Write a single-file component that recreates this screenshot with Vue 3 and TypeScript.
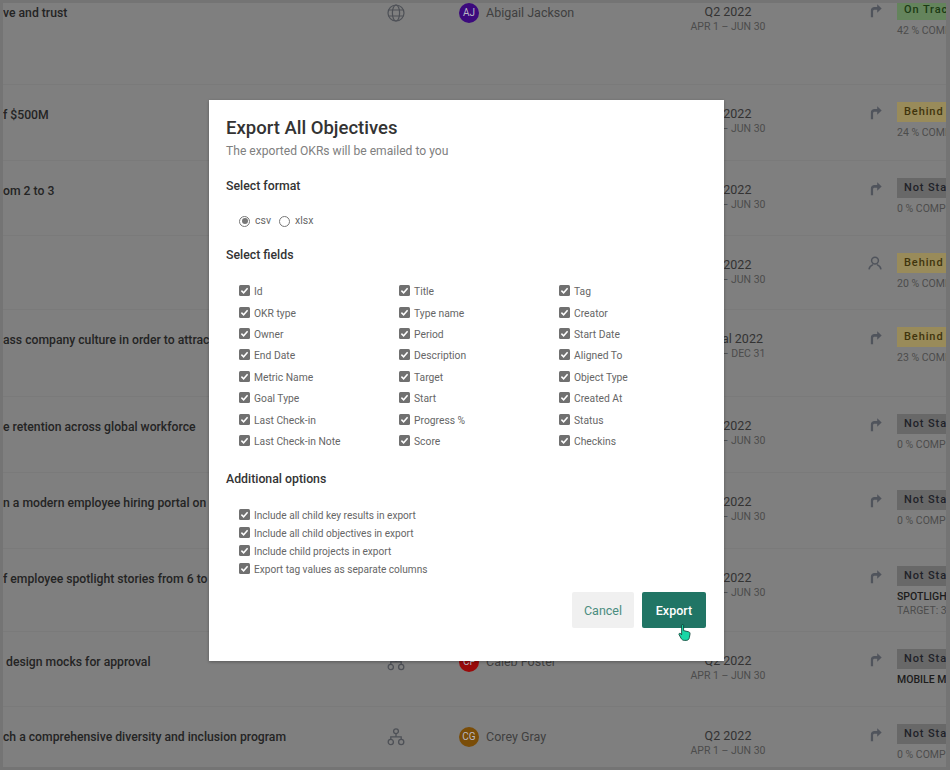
<script setup lang="ts">
import { ref } from 'vue';

interface Row {
  title: string;
  height: number;
  icon: 'share' | 'person';
  level?: 'globe' | 'tree';
  owner?: { initials: string; name: string; color: string };
  period: string;
  dates: string;
  status: string;
  statusClass: string;
  metric: string;
  target?: string;
}

const rows: Row[] = [
  { title: 've and trust', height: 102, icon: 'share', level: 'globe', owner: { initials: 'AJ', name: 'Abigail Jackson', color: '#3c0a7d' }, period: 'Q2 2022', dates: 'APR 1 – JUN 30', status: 'On Track', statusClass: 'on-track', metric: '42 % COMPLETE' },
  { title: 'f $500M', height: 76, icon: 'share', period: 'Q2 2022', dates: 'APR 1 – JUN 30', status: 'Behind', statusClass: 'behind', metric: '24 % COMPLETE' },
  { title: 'om 2 to 3', height: 75, icon: 'share', period: 'Q2 2022', dates: 'APR 1 – JUN 30', status: 'Not Started', statusClass: 'not-started', metric: '0 % COMPLETE' },
  { title: '', height: 74, icon: 'person', period: 'Q2 2022', dates: 'APR 1 – JUN 30', status: 'Behind', statusClass: 'behind', metric: '20 % COMPLETE' },
  { title: 'ass company culture in order to attract', height: 87, icon: 'share', period: 'Annual 2022', dates: 'JAN 1 – DEC 31', status: 'Behind', statusClass: 'behind', metric: '23 % COMPLETE' },
  { title: 'e retention across global workforce', height: 76, icon: 'share', period: 'Q2 2022', dates: 'APR 1 – JUN 30', status: 'Not Started', statusClass: 'not-started', metric: '0 % COMPLETE' },
  { title: 'n a modern employee hiring portal on', height: 76, icon: 'share', period: 'Q2 2022', dates: 'APR 1 – JUN 30', status: 'Not Started', statusClass: 'not-started', metric: '0 % COMPLETE' },
  { title: 'f employee spotlight stories from 6 to', height: 83, icon: 'share', period: 'Q2 2022', dates: 'APR 1 – JUN 30', status: 'Not Started', statusClass: 'not-started', metric: 'SPOTLIGHT STORIES', target: 'TARGET: 30' },
  { title: ' design mocks for approval', height: 75, icon: 'share', level: 'tree', owner: { initials: 'CF', name: 'Caleb Foster', color: '#990a0a' }, period: 'Q2 2022', dates: 'APR 1 – JUN 30', status: 'Not Started', statusClass: 'not-started', metric: 'MOBILE MOCKS' },
  { title: 'ch a comprehensive diversity and inclusion program', height: 75, icon: 'share', level: 'tree', owner: { initials: 'CG', name: 'Corey Gray', color: '#7a4d08' }, period: 'Q2 2022', dates: 'APR 1 – JUN 30', status: 'Not Started', statusClass: 'not-started', metric: '0 % COMPLETE' }
];

const fields = [
  'Id', 'Title', 'Tag',
  'OKR type', 'Type name', 'Creator',
  'Owner', 'Period', 'Start Date',
  'End Date', 'Description', 'Aligned To',
  'Metric Name', 'Target', 'Object Type',
  'Goal Type', 'Start', 'Created At',
  'Last Check-in', 'Progress %', 'Status',
  'Last Check-in Note', 'Score', 'Checkins'
];

const options = [
  'Include all child key results in export',
  'Include all child objectives in export',
  'Include child projects in export',
  'Export tag values as separate columns'
];

const format = ref('csv');
</script>

<template>
  <div class="page">
    <div class="list">
      <div v-for="row in rows" :key="row.title + row.height" class="row" :style="{ height: `${row.height}px` }">
        <div class="title">{{ row.title }}</div>
        <div class="level">
          <svg v-if="row.level === 'globe'" width="18" height="18" viewBox="0 0 18 18" fill="none" stroke="#4e5157" stroke-width="1.2">
            <circle cx="9" cy="9" r="8" />
            <ellipse cx="9" cy="9" rx="3.6" ry="8" />
            <path d="M1.6 6h14.8M1.6 12h14.8" />
          </svg>
          <svg v-else-if="row.level === 'tree'" width="18" height="18" viewBox="0 0 18 18" fill="none" stroke="#4e5157" stroke-width="1.3">
            <circle cx="9" cy="3.2" r="2.4" />
            <circle cx="3.8" cy="14" r="2.6" />
            <circle cx="14.2" cy="14" r="2.6" />
            <path d="M9 5.6v3.2M3.8 11.4V8.8h10.4v2.6" />
          </svg>
        </div>
        <div class="owner">
          <template v-if="row.owner">
            <span class="avatar" :style="{ background: row.owner.color }">{{ row.owner.initials }}</span>
            <span class="owner-name">{{ row.owner.name }}</span>
          </template>
        </div>
        <div class="period">
          <div class="period-name">{{ row.period }}</div>
          <div class="period-dates">{{ row.dates }}</div>
        </div>
        <div class="kind">
          <svg v-if="row.icon === 'share'" width="12" height="15" viewBox="0 0 14 16" fill="#50545c">
            <path d="M1 16V8.2C1 5.6 2.8 4 5.2 4H8.4V0.6L13.6 5.6 8.4 10.6V7H5.4C4.2 7 3.6 7.6 3.6 8.8V16Z" />
          </svg>
          <svg v-else width="14" height="14" viewBox="0 0 14 14" fill="none" stroke="#50545c" stroke-width="1.5">
            <circle cx="7" cy="4.6" r="3.4" />
            <path d="M1 13.4C1.4 10.6 3.4 9.2 5 8.6M13 13.4C12.6 10.6 10.6 9.2 9 8.6" />
          </svg>
        </div>
        <div class="status">
          <span class="badge" :class="row.statusClass">{{ row.status }}</span>
          <div class="metric" :class="{ strong: row.metric.indexOf('%') < 0 }">{{ row.metric }}</div>
          <div v-if="row.target" class="metric">{{ row.target }}</div>
        </div>
      </div>
    </div>

    <!-- Modal and backdrop -->
    <div class="backdrop">
      <div class="modal">
        <h1 class="modal-title">Export All Objectives</h1>
        <p class="modal-sub">The exported OKRs will be emailed to you</p>

        <h2 class="section first">Select format</h2>
        <div class="formats">
          <label v-for="f in ['csv', 'xlsx']" :key="f" class="radio-item">
            <span class="radio" :class="{ on: format === f }"></span>{{ f }}
          </label>
        </div>

        <h2 class="section fields-head">Select fields</h2>
        <div class="fields">
          <label v-for="field in fields" :key="field" class="check-item">
            <svg class="check" width="11" height="11" viewBox="0 0 11 11">
              <rect width="11" height="11" rx="1.5" fill="#707070" />
              <path d="M2.4 5.6 4.6 7.8 8.6 3.2" fill="none" stroke="#fff" stroke-width="1.5" />
            </svg>
            {{ field }}
          </label>
        </div>

        <h2 class="section options-head">Additional options</h2>
        <div class="options">
          <label v-for="opt in options" :key="opt" class="check-item">
            <svg class="check" width="11" height="11" viewBox="0 0 11 11">
              <rect width="11" height="11" rx="1.5" fill="#707070" />
              <path d="M2.4 5.6 4.6 7.8 8.6 3.2" fill="none" stroke="#fff" stroke-width="1.5" />
            </svg>
            {{ opt }}
          </label>
        </div>

        <div class="actions">
          <button class="btn cancel">Cancel</button>
          <button class="btn export">Export</button>
          <!-- Mouse pointer from the screen recording -->
          <svg class="pointer" width="13" height="17" viewBox="0 0 13 17">
            <path d="M3.6 1.4C3.6 .4 5.6 .4 5.6 1.4V6.6L10.6 7.8C11.8 8.2 12.2 9 12 10.2L11.4 13.4C11.2 15.2 10 16.4 8.2 16.4H6.4C4.8 16.4 3.8 15.6 3 14.2L1 10.6C.6 9.6 1.8 8.8 2.6 9.6L3.6 10.8Z" fill="#1ad6a6" stroke="#0b3b30" stroke-width=".8" />
          </svg>
        </div>
      </div>
    </div>
  </div>
</template>

<style>
html, body {
  margin: 0;
  overflow: hidden;
}
</style>

<style scoped>
.page {
  position: relative;
  box-sizing: border-box;
  width: 950px;
  height: 770px;
  overflow: hidden;
  background: #7f7f7f;
  border: solid #747474;
  border-width: 3px 4px 3px 3px;
  font-family: Roboto, "Noto Sans", sans-serif;
  color: #2a2a2a;
}

.list {
  margin-top: -20px;
}

.row {
  box-sizing: border-box;
  display: grid;
  grid-template-columns: 373px 40px 252px 120px 108px 1fr;
  padding-top: 17px;
  border-bottom: 1px solid #7a7a7a;
}

.title {
  padding-top: 3px;
  font-size: 12.2px;
  font-weight: 500;
  line-height: 20px;
  white-space: pre;
  overflow: hidden;
  color: #242424;
}

.level {
  display: flex;
  justify-content: center;
  padding-top: 4px;
}

.owner {
  display: flex;
  align-items: flex-start;
  gap: 7px;
  padding: 3px 0 0 43px;
}

.avatar {
  width: 20px;
  height: 20px;
  flex: none;
  border-radius: 50%;
  color: #b9b9c4;
  font-size: 10px;
  line-height: 20px;
  text-align: center;
}

.owner-name {
  font-size: 12.5px;
  line-height: 20px;
  color: #404040;
}

.period {
  padding-top: 3px;
  text-align: center;
}

.period-name {
  font-size: 12.5px;
  line-height: 18px;
  color: #333;
}

.period-dates {
  font-size: 10.5px;
  line-height: 12px;
  color: #4c4c4c;
}

.kind {
  display: flex;
  justify-content: flex-end;
  padding: 3px 14px 0 0;
}

.status {
  padding-left: 1px;
  white-space: nowrap;
  overflow: hidden;
}

.badge {
  display: block;
  width: 90px;
  height: 20px;
  box-sizing: border-box;
  padding-left: 7px;
  font-size: 11px;
  font-weight: 500;
  line-height: 19px;
  letter-spacing: 0.9px;
}

.on-track {
  background: #64845c;
  color: #1b3a13;
}

.behind {
  background: #998b5a;
  color: #40340c;
}

.not-started {
  background: #686868;
  color: #1f2229;
}

.metric {
  font-size: 10.5px;
  line-height: 14px;
  color: #4c4c4c;
}

.status .metric:nth-child(2) {
  margin-top: 4px;
}

.metric.strong {
  color: #1c1c1c;
  font-weight: 500;
}

.backdrop {
  position: absolute;
  inset: -3px -4px -3px -3px;
  display: flex;
  align-items: flex-start;
  padding: 100px 0 0 209px;
}

.modal {
  box-sizing: border-box;
  width: 515px;
  height: 561px;
  padding: 17px 18px 0 17px;
  background: #fff;
  box-shadow: 0 1px 3px rgba(0, 0, 0, 0.3);
  color: #444;
}

.modal-title {
  margin: 0;
  font-size: 18.5px;
  font-weight: 500;
  line-height: 22px;
  color: #333;
}

.modal-sub {
  margin: 3px 0 0;
  font-size: 12.1px;
  line-height: 18px;
  color: #808080;
}

.section {
  margin: 0;
  font-size: 12.3px;
  font-weight: 500;
  line-height: 18px;
  color: #333;
}

.section.first {
  margin-top: 17px;
}

.formats {
  display: flex;
  gap: 8px;
  margin: 17px 0 0 13px;
}

.radio-item {
  display: flex;
  align-items: center;
  gap: 5px;
  font-size: 10.5px;
  line-height: 18px;
  color: #666;
}

.radio {
  position: relative;
  box-sizing: border-box;
  width: 11px;
  height: 11px;
  border: 1px solid #777;
  border-radius: 50%;
}

.radio.on::after {
  content: "";
  position: absolute;
  inset: 1.5px;
  border-radius: 50%;
  background: #777;
}

.fields-head {
  margin-top: 16px;
}

.fields {
  display: grid;
  grid-template-columns: repeat(3, 160px);
  grid-auto-rows: 21.4px;
  margin: 17px 0 0 13px;
}

.check-item {
  display: flex;
  align-items: center;
  gap: 4px;
  font-size: 10.3px;
  color: #666;
  white-space: nowrap;
}

.check {
  flex: none;
  margin-bottom: 2px;
}

.options-head {
  margin-top: 18px;
}

.options {
  display: grid;
  grid-auto-rows: 18px;
  margin: 18px 0 0 13px;
}

.options .check-item {
  font-size: 10.1px;
}

.actions {
  position: relative;
  display: flex;
  justify-content: flex-end;
  gap: 8px;
  margin-top: 14px;
}

.btn {
  height: 36px;
  border: none;
  border-radius: 2px;
  font-family: inherit;
  font-size: 12.5px;
}

.cancel {
  width: 62px;
  background: #f0f0f0;
  color: #4a8d7f;
}

.export {
  width: 64px;
  background: #217565;
  color: #fff;
  font-weight: 500;
}

.pointer {
  position: absolute;
  right: 15px;
  top: 32px;
}
</style>
